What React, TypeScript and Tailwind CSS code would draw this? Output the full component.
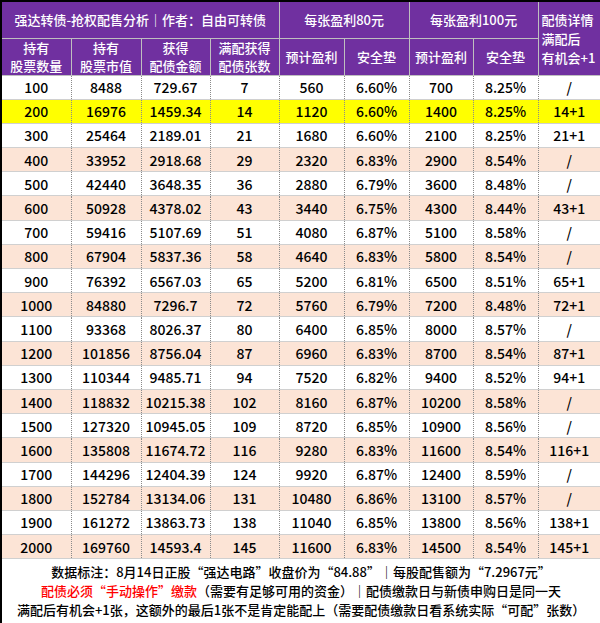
import React from "react";

const rows: string[][] = [
  ["100", "8488", "729.67", "7", "560", "6.60%", "700", "8.25%", "/"],
  ["200", "16976", "1459.34", "14", "1120", "6.60%", "1400", "8.25%", "14+1"],
  ["300", "25464", "2189.01", "21", "1680", "6.60%", "2100", "8.25%", "21+1"],
  ["400", "33952", "2918.68", "29", "2320", "6.83%", "2900", "8.54%", "/"],
  ["500", "42440", "3648.35", "36", "2880", "6.79%", "3600", "8.48%", "/"],
  ["600", "50928", "4378.02", "43", "3440", "6.75%", "4300", "8.44%", "43+1"],
  ["700", "59416", "5107.69", "51", "4080", "6.87%", "5100", "8.58%", "/"],
  ["800", "67904", "5837.36", "58", "4640", "6.83%", "5800", "8.54%", "/"],
  ["900", "76392", "6567.03", "65", "5200", "6.81%", "6500", "8.51%", "65+1"],
  ["1000", "84880", "7296.7", "72", "5760", "6.79%", "7200", "8.48%", "72+1"],
  ["1100", "93368", "8026.37", "80", "6400", "6.85%", "8000", "8.57%", "/"],
  ["1200", "101856", "8756.04", "87", "6960", "6.83%", "8700", "8.54%", "87+1"],
  ["1300", "110344", "9485.71", "94", "7520", "6.82%", "9400", "8.52%", "94+1"],
  ["1400", "118832", "10215.38", "102", "8160", "6.87%", "10200", "8.58%", "/"],
  ["1500", "127320", "10945.05", "109", "8720", "6.85%", "10900", "8.56%", "/"],
  ["1600", "135808", "11674.72", "116", "9280", "6.83%", "11600", "8.54%", "116+1"],
  ["1700", "144296", "12404.39", "124", "9920", "6.87%", "12400", "8.59%", "/"],
  ["1800", "152784", "13134.06", "131", "10480", "6.86%", "13100", "8.57%", "/"],
  ["1900", "161272", "13863.73", "138", "11040", "6.85%", "13800", "8.56%", "138+1"],
  ["2000", "169760", "14593.4", "145", "11600", "6.83%", "14500", "8.54%", "145+1"],
];

const widths = [70, 70, 69, 69, 65, 65, 64, 65, 63];

function rowBg(i: number) {
  if (i === 1) return "bg-[#ffff00]";
  if (i % 2 === 1) return "bg-[#fce4d6]";
  return "bg-white";
}

export default function App() {
  return (
    <div
      className="w-[600px] h-[623px] overflow-hidden bg-white text-black"
      style={{ fontFamily: '"Noto Sans CJK SC", "Noto Sans", sans-serif' }}
    >
      <table className="w-[600px] table-fixed border-collapse border-2 border-black text-[13px] leading-[18px]">
        <colgroup>
          {widths.map((w, i) => (
            <col key={i} style={{ width: w }} />
          ))}
        </colgroup>
        <thead>
          <tr className="h-[37px] bg-[#7030a0] text-white">
            <th colSpan={4} className="border border-[#bfbfbf] border-l-black border-t-black font-medium text-center">
              强达转债-抢权配售分析｜作者：自由可转债
            </th>
            <th colSpan={2} className="border border-[#bfbfbf] border-t-black font-medium text-center">
              每张盈利80元
            </th>
            <th colSpan={2} className="border border-[#bfbfbf] border-t-black font-medium text-center">
              每张盈利100元
            </th>
            <th rowSpan={2} className="border border-[#bfbfbf] border-t-black border-r-black font-medium text-left pl-[3px] leading-[19px]">
              配债详情
              <br />
              满配后
              <br />
              有机会+1
            </th>
          </tr>
          <tr className="h-[37px] bg-[#7030a0] text-white">
            {[
              ["持有", "股票数量"],
              ["持有", "股票市值"],
              ["获得", "配债金额"],
              ["满配获得", "配债张数"],
            ].map((t, i) => (
              <th key={i} className="border border-[#bfbfbf] font-medium text-center leading-[18px]">
                {t[0]}
                <br />
                {t[1]}
              </th>
            ))}
            {["预计盈利", "安全垫", "预计盈利", "安全垫"].map((t, i) => (
              <th key={i} className="border border-[#bfbfbf] font-medium text-center">
                {t}
              </th>
            ))}
          </tr>
        </thead>
        <tbody>
          {rows.map((r, i) => (
            <tr key={i} className={`h-[24.2px] ${rowBg(i)}`}>
              {r.map((c, j) => (
                <td
                  key={j}
                  className={`border-b border-b-[#d0d0d0] ${
                    j < 8 ? "border-r border-r-[#8a8a8a] border-dotted" : ""
                  } text-center font-medium p-0 text-[14px]`}
                  style={{ borderBottomStyle: "solid" }}
                >
                  {c}
                </td>
              ))}
            </tr>
          ))}
          <tr className="bg-white">
            <td colSpan={9} className="text-center text-[13px] leading-[19px] pt-[3px] pb-[4px] font-medium">
              <div>数据标注：8月14日正股“强达电路”收盘价为“84.88”｜每股配售额为“7.2967元”</div>
              <div>
                <span className="text-[#ff0000]">配债必须“手动操作”缴款</span>（需要有足够可用的资金）｜配债缴款日与新债申购日是同一天
              </div>
              <div className="whitespace-nowrap">
                满配后有机会+1张，这额外的最后1张不是肯定能配上（需要配债缴款日看系统实际“可配”张数）
              </div>
            </td>
          </tr>
        </tbody>
      </table>
    </div>
  );
}
